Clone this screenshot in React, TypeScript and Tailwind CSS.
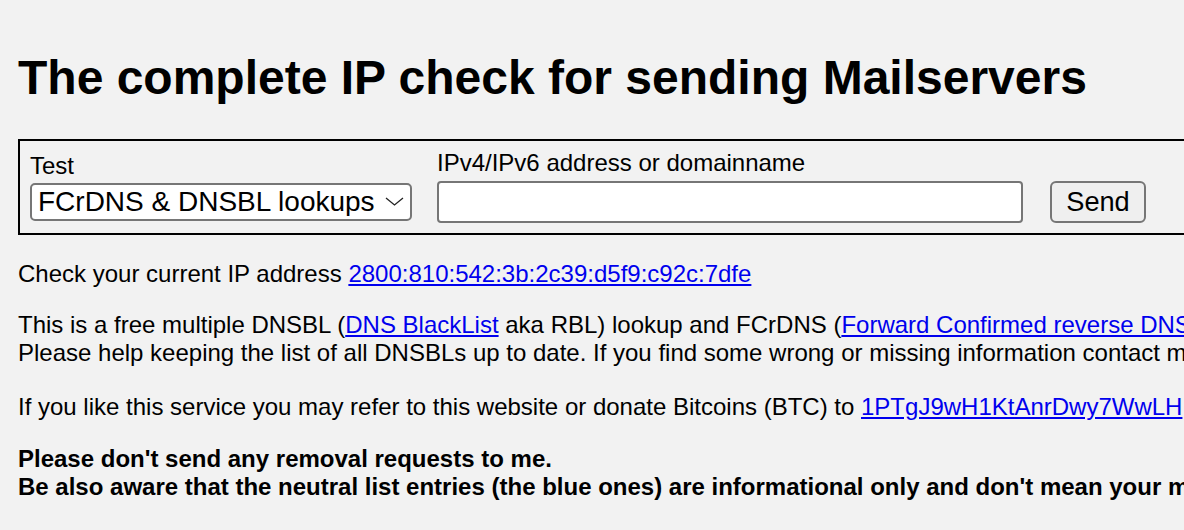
import React from "react";

const Link: React.FC<{ children: React.ReactNode }> = ({ children }) => (
  <a href="#" className="text-[#0000ee] underline">
    {children}
  </a>
);

const App: React.FC = () => {
  return (
    <div className="w-[1184px] h-[530px] overflow-hidden bg-[#f2f2f2] text-black font-['Liberation_Sans',Arial,sans-serif] text-[24px] leading-[28px]">
      <div className="w-[1600px] pl-[18px] pt-[50px]">
        <h1 className="text-[48px] leading-[55px] font-bold">
          The complete IP check for sending Mailservers
        </h1>

        <form
          className="mt-[34px] w-[1500px] border-2 border-black flex items-center pl-[10px] pt-[8px] pb-[10px]"
          onSubmit={(e) => e.preventDefault()}
        >
          <div className="flex flex-col">
            <label className="leading-[28px]">Test</label>
            <div className="relative mt-[3px] w-[382px] h-[38px]">
              <select className="appearance-none w-full h-full bg-white border-2 border-[#767676] rounded-[5px] pl-[6px] text-[28px] leading-none">
                <option>FCrDNS &amp; DNSBL lookups</option>
              </select>
              <svg
                className="absolute left-[355px] top-[14px] pointer-events-none"
                width="19"
                height="9"
                viewBox="0 0 19 9"
                fill="none"
              >
                <path d="M1 1 L9.5 8 L18 1" stroke="#222" strokeWidth="1.3" />
              </svg>
            </div>
          </div>

          <div className="flex flex-col ml-[25px]">
            <label className="leading-[28px]">IPv4/IPv6 address or domainname</label>
            <input
              type="text"
              className="mt-[4px] w-[586px] h-[42px] bg-white border-2 border-[#767676] rounded-[4px] px-[4px] text-[26.67px]"
            />
          </div>

          <button
            type="submit"
            className="self-end ml-[27px] w-[96px] h-[42px] bg-[#efefef] border-2 border-[#767676] rounded-[6px] text-[27.2px] leading-none"
          >
            Send
          </button>
        </form>

        <p className="mt-[25px] whitespace-nowrap">
          Check your current IP address <Link>2800:810:542:3b:2c39:d5f9:c92c:7dfe</Link>
        </p>

        <p className="mt-[23px] whitespace-nowrap">
          This is a free multiple DNSBL (<Link>DNS BlackList</Link> aka RBL) lookup and FCrDNS (
          <Link>Forward Confirmed reverse DNS</Link>) check.
          <br />
          Please help keeping the list of all DNSBLs up to date. If you find some wrong or missing
          information contact me.
        </p>

        <p className="mt-[26px] whitespace-nowrap">
          If you like this service you may refer to this website or donate Bitcoins (BTC) to{" "}
          <Link>1PTgJ9wH1KtAnrDwy7WwLH</Link>
        </p>

        <p className="mt-[24px] whitespace-nowrap font-bold">
          Please don't send any removal requests to me.
          <br />
          Be also aware that the neutral list entries (the blue ones) are informational only and
          don't mean your mailserver is listed.
        </p>
      </div>
    </div>
  );
};

export default App;
